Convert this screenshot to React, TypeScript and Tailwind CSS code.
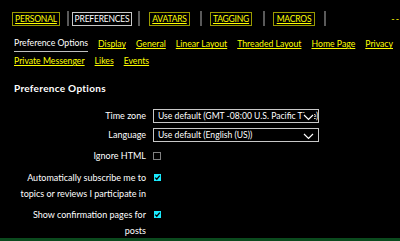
import { ReactNode } from 'react'

// left margin before each box, box width, margin before the separator that follows
const tabs = [
  { label: 'PERSONAL', active: false, ml: 'ml-[12px]', w: 'w-[48px]', sep: 'ml-[7px]' },
  { label: 'PREFERENCES', active: true, ml: 'ml-[3px]', w: 'w-[60px]', sep: 'ml-[6px]' },
  { label: 'AVATARS', active: false, ml: 'ml-[9px]', w: 'w-[41px]', sep: 'ml-[10px]' },
  { label: 'TAGGING', active: false, ml: 'ml-[8px]', w: 'w-[42px]', sep: 'ml-[11px]' },
  { label: 'MACROS', active: false, ml: 'ml-[8px]', w: 'w-[42px]', sep: 'ml-[9px]' },
]

const linksTop = ['Display', 'General', 'Linear Layout', 'Threaded Layout', 'Home Page', 'Privacy']
const linksBottom = ['Private Messenger', 'Likes', 'Events']

function Tab({ label, active, className }: { label: string; active: boolean; className: string }) {
  return (
    <span
      className={
        (active
          ? 'border-[#c8c8c8] text-white '
          : 'border-[#9a9a00] text-[#ffff00] underline ') +
        'whitespace-nowrap border text-center h-[14px] leading-[12px] text-[8.5px] tracking-[-0.2px] ' +
        className
      }
    >
      {label}
    </span>
  )
}

function Row({ label, children, className }: { label: ReactNode; children: ReactNode; className?: string }) {
  return (
    <div className={'grid grid-cols-[132px_1fr] gap-x-[7px] items-start ' + (className ?? '')}>
      <div className="text-right leading-[16px] whitespace-nowrap">{label}</div>
      <div className="flex items-start">{children}</div>
    </div>
  )
}

function Select({ value }: { value: string }) {
  return (
    <div className="relative mt-[1px] w-[166px] h-[14px] border border-[#c8c8c8] overflow-hidden">
      <span className="absolute left-[4px] top-[-1px] whitespace-nowrap leading-[14px] text-[8.6px] text-white">{value}</span>
      <svg className="absolute right-[4px] top-[3px] bg-black" width="11" height="8" viewBox="0 0 11 8" fill="none" stroke="white" strokeWidth="1.2">
        <path d="M1 2l4.5 4.5L10 2" />
      </svg>
    </div>
  )
}

function Checkbox({ checked }: { checked: boolean }) {
  if (!checked) return <span className="mt-[4px] block w-[8px] h-[8px] border border-[#808080]" />
  return (
    <span className="mt-[4px] ml-[1px] block w-[7px] h-[7px] bg-[#1aebff]">
      <svg width="7" height="7" viewBox="0 0 7 7" fill="none" stroke="black" strokeWidth="1.3">
        <path d="M1.2 3.6l1.6 1.6L5.8 1.6" />
      </svg>
    </span>
  )
}

export default function App() {
  return (
    <div className="w-[400px] h-[241px] bg-black text-white overflow-hidden flex flex-col text-[9px]" style={{ fontFamily: 'Lato, "Noto Sans", sans-serif' }}>
      {/* Tabs */}
      <div className="relative flex items-center pt-[11px] h-[26px]">
        {tabs.map((t) => (
          <div key={t.label} className="flex items-center shrink-0">
            <Tab label={t.label} active={t.active} className={t.ml + ' ' + t.w} />
            <span className={t.sep + ' w-[2px] h-[15px] bg-[#5a5a5a]'} />
          </div>
        ))}
        <span className="absolute right-0 top-[14px] text-[#ffff00] leading-none tracking-[1px]">--</span>
      </div>

      {/* Sub navigation */}
      <div className="px-[14px] pt-[9px] leading-[17px] whitespace-nowrap text-[8.7px]">
        <div className="flex gap-x-[10px]">
          <span className="border-b border-[#c0c0c0] leading-[15px] h-[17px]">Preference Options</span>
          {linksTop.map((l) => (
            <span key={l} className="text-[#ffff00] underline">{l}</span>
          ))}
        </div>
        <div className="flex gap-x-[10px]">
          {linksBottom.map((l) => (
            <span key={l} className="text-[#ffff00] underline">{l}</span>
          ))}
        </div>
      </div>

      <div className="flex-1 overflow-hidden">
        <div className="px-[14px] pt-[11px] leading-[16px] font-bold text-[10px] tracking-[0.3px]">Preference Options</div>

        <div className="flex flex-col pl-[14px] pt-[12px]">
          <Row label="Time zone">
            <Select value="Use default (GMT -08:00 U.S. Pacific Time)" />
          </Row>
          <Row label="Language" className="mt-[3px]">
            <Select value="Use default (English (US))" />
          </Row>
          <Row label="Ignore HTML" className="mt-[5px]">
            <Checkbox checked={false} />
          </Row>
          <Row label={<>Automatically subscribe me to<br />topics or reviews I participate in</>} className="mt-[6px]">
            <Checkbox checked />
          </Row>
          <Row label={<>Show confirmation pages for<br />posts</>} className="mt-[5px]">
            <Checkbox checked />
          </Row>
        </div>
      </div>

      <div className="h-[3px] bg-[#0b4a1e]" />
    </div>
  )
}
